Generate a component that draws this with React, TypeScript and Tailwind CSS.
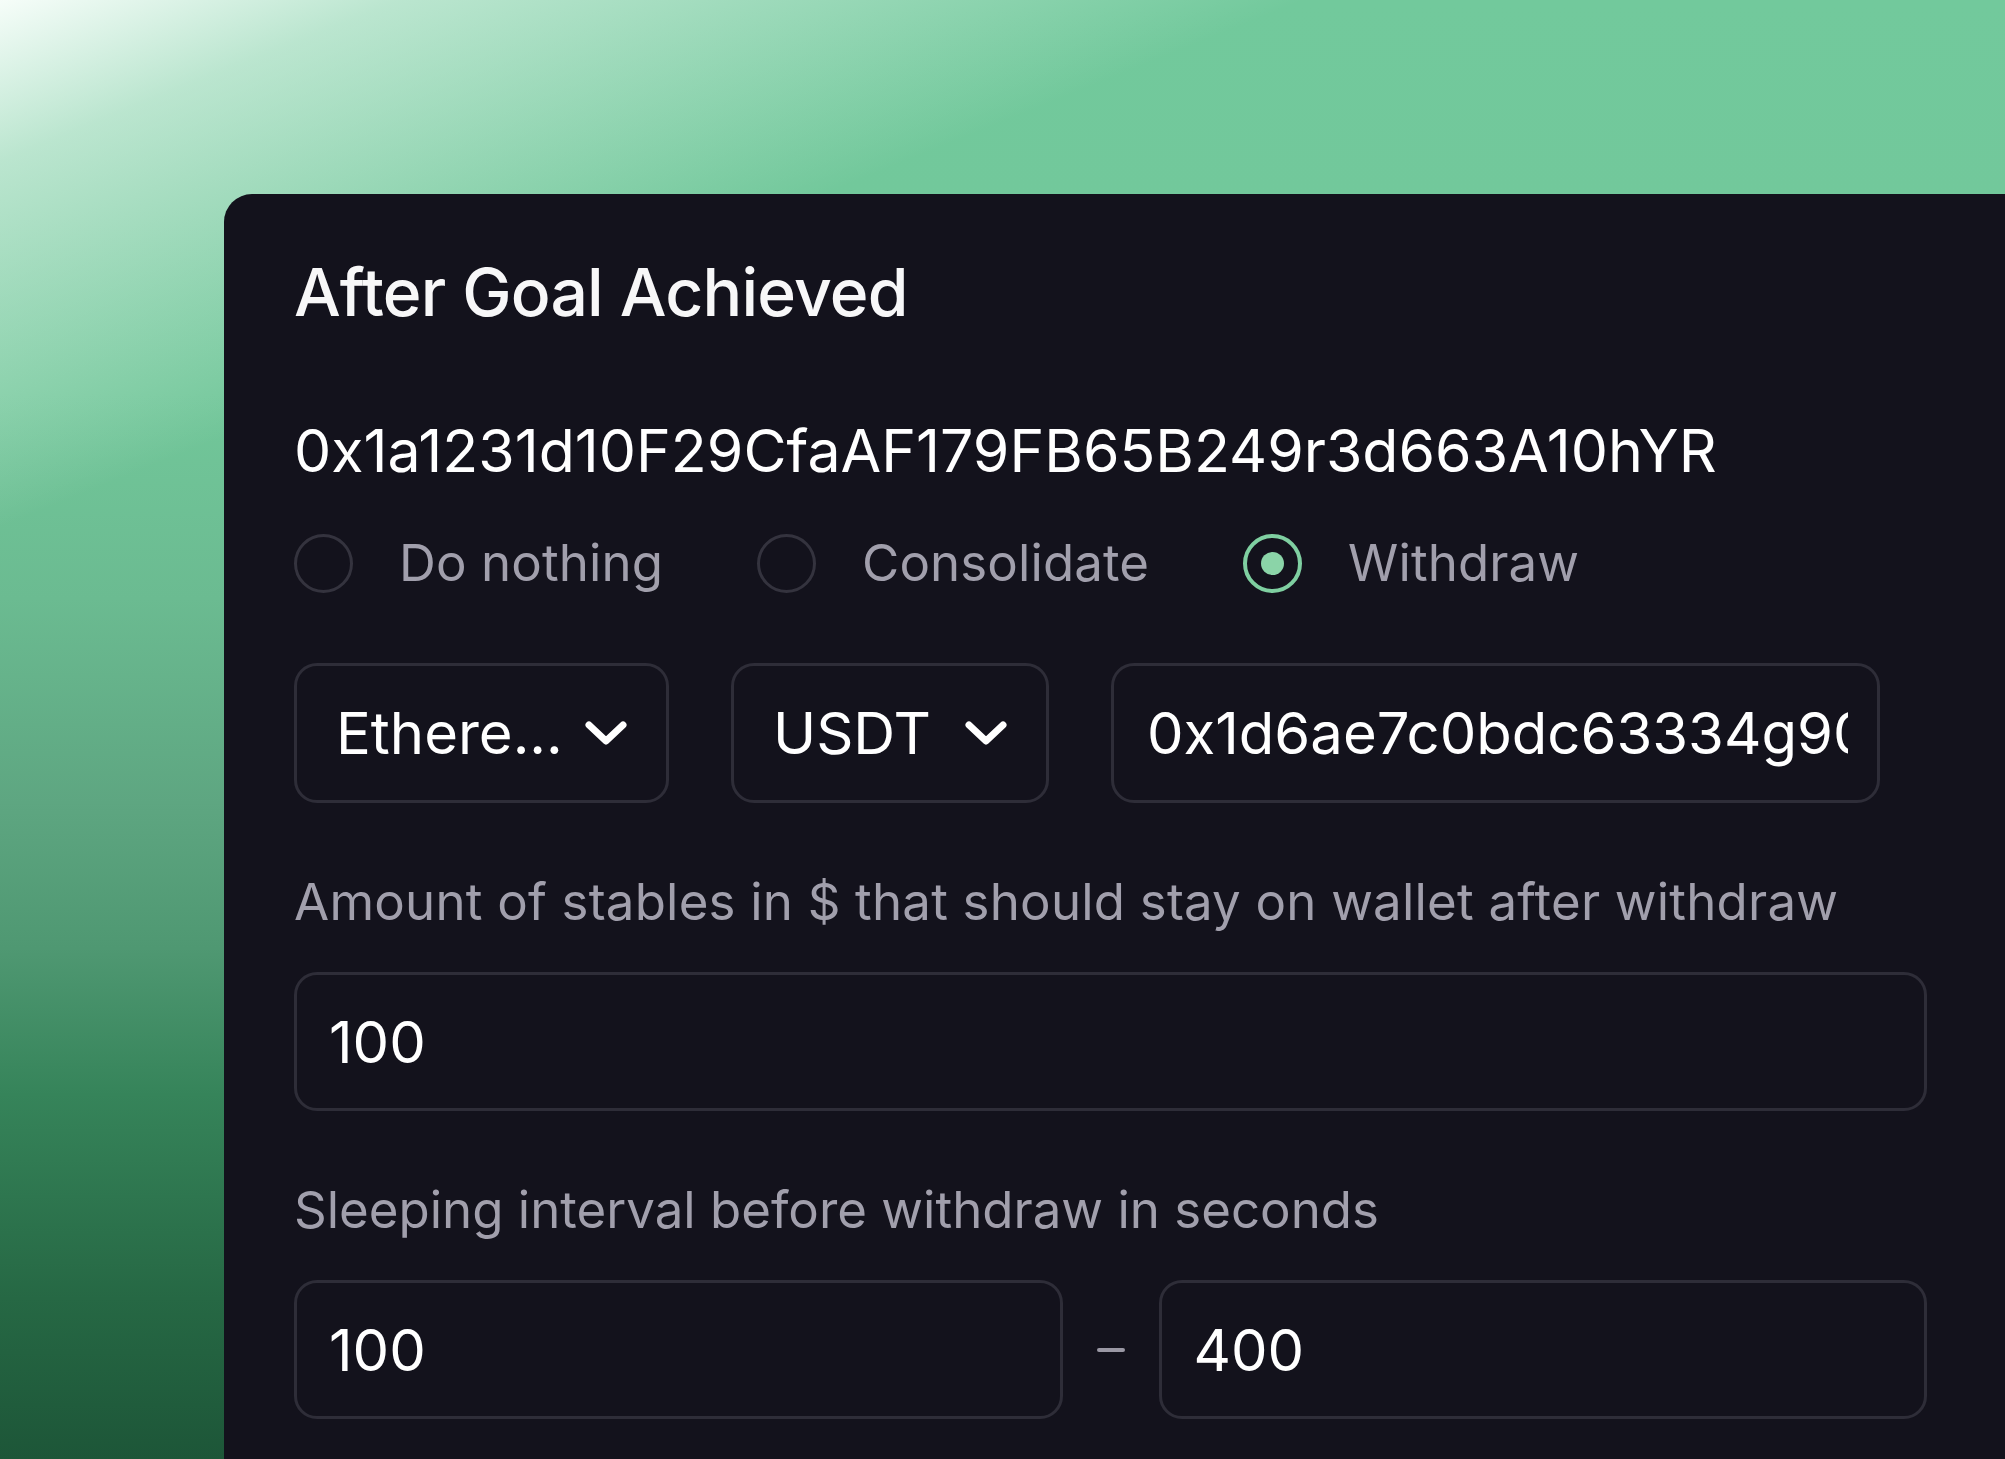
import { useState } from 'react';

const options = ['Do nothing', 'Consolidate', 'Withdraw'];

function Chevron() {
  return (
    <svg width="44" height="26" viewBox="0 0 44 26" fill="none" className="shrink-0">
      <path d="M5 5 L22 21 L39 5" stroke="white" strokeWidth="7" strokeLinecap="round" strokeLinejoin="round" />
    </svg>
  );
}

function Radio({ label, checked, onClick }: { label: string; checked: boolean; onClick: () => void }) {
  return (
    <button type="button" onClick={onClick} className="flex items-center gap-[46px] h-[60px]">
      <span
        className={
          checked
            ? 'w-[59px] h-[59px] rounded-full border-[4px] border-[#7fcfa1] flex items-center justify-center'
            : 'w-[59px] h-[59px] rounded-full border-[3px] border-[#34333e]'
        }
      >
        {checked && <span className="w-[23px] h-[23px] rounded-full bg-[#8bd4a8]" />}
      </span>
      <span className="text-[51px] leading-[60px] tracking-[0.1px] text-[#a19fac]">{label}</span>
    </button>
  );
}

function Select({ value, width }: { value: string; width: string }) {
  return (
    <div className={`${width} h-[140px] rounded-[23px] border-[3px] border-[#2e2d38] pl-[39px] pr-[38px] flex items-center justify-between`}>
      <span className="text-[58px] leading-none text-white whitespace-nowrap">{value}</span>
      <Chevron />
    </div>
  );
}

export default function App() {
  const [choice, setChoice] = useState('Withdraw');

  return (
    <div className="h-screen w-full overflow-hidden pt-[194px] pl-[224px] font-['Inter',sans-serif] bg-[linear-gradient(158deg,#f6fdf9_0px,rgba(246,253,249,0.55)_150px,rgba(246,253,249,0)_490px),linear-gradient(to_bottom,#72c99c_0%,#72c79a_27%,#6bbb91_41%,#5ea681_55%,#4f9872_65%,#36845a_75%,#266844_89%,#1d5638_100%)]">
      <div className="w-[1900px] rounded-tl-[28px] bg-[#13121c] pt-[58px] pl-[70px] pb-[200px]">
        <div className="w-[1633px] flex flex-col">
          <h2 className="text-[66px] leading-[80px] font-medium tracking-[-0.8px] text-[#f7f7f8]">After Goal Achieved</h2>

          <p className="mt-[83px] text-[59px] leading-[72px] text-white">0x1a1231d10F29CfaAF179FB65B249r3d663A10hYR</p>

          <div className="mt-[46px] flex items-center gap-[94px]">
            {options.map((o) => (
              <Radio key={o} label={o} checked={choice === o} onClick={() => setChoice(o)} />
            ))}
          </div>

          <div className="mt-[70px] flex gap-[62px]">
            <Select value="Ethere..." width="w-[375px]" />
            <Select value="USDT" width="w-[318px]" />
            <input
              readOnly
              value="0x1d6ae7c0bdc63334g90f0a6d3e0b2c81c7d2a9e"
              className="w-[769px] h-[140px] rounded-[23px] border-[3px] border-[#2e2d38] bg-transparent pl-[33px] pr-[29px] text-[58px] text-white font-['Inter',sans-serif] outline-none"
            />
          </div>

          <label className="mt-[68px] text-[51px] leading-[62px] tracking-[0.2px] text-[#a19fac]">
            Amount of stables in $ that should stay on wallet after withdraw
          </label>
          <input
            readOnly
            value="100"
            className="mt-[39px] w-full h-[139px] rounded-[23px] border-[3px] border-[#2e2d38] bg-transparent px-[32px] text-[58px] text-white font-['Inter',sans-serif] outline-none"
          />

          <label className="mt-[68px] text-[51px] leading-[62px] text-[#a19fac]">
            Sleeping interval before withdraw in seconds
          </label>
          <div className="mt-[39px] flex items-center gap-[34px]">
            <input
              readOnly
              value="100"
              className="flex-1 min-w-0 h-[139px] rounded-[23px] border-[3px] border-[#2e2d38] bg-transparent px-[32px] text-[58px] text-white font-['Inter',sans-serif] outline-none"
            />
            <span className="w-[28px] h-[4px] rounded-full bg-[#9a98a4] shrink-0" />
            <input
              readOnly
              value="400"
              className="flex-1 min-w-0 h-[139px] rounded-[23px] border-[3px] border-[#2e2d38] bg-transparent px-[32px] text-[58px] text-white font-['Inter',sans-serif] outline-none"
            />
          </div>
        </div>
      </div>
    </div>
  );
}
